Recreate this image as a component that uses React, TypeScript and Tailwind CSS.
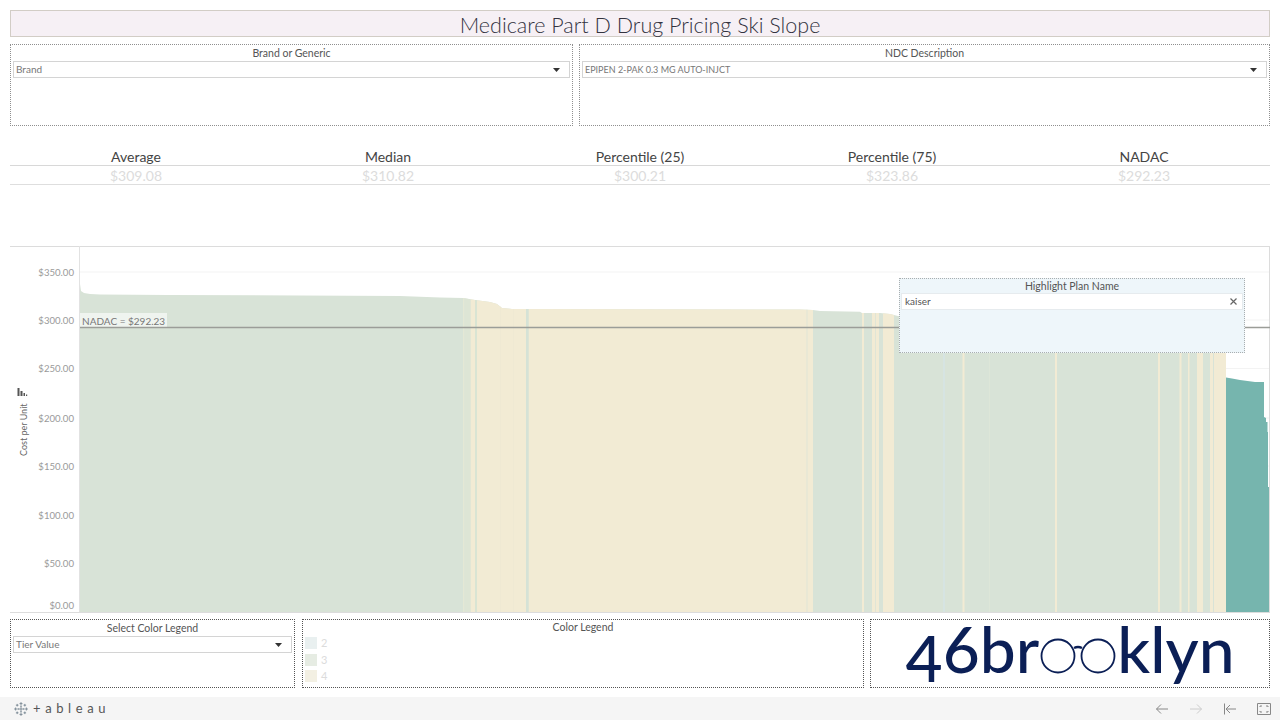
import type { JSX, ReactNode } from 'react';

const font = { fontFamily: 'Lato, "Open Sans", sans-serif' };

const GREEN = '#d8e3d7';
const YELLOW = '#f2ebd4';
const TEAL = '#76b5ae';

const stats = [
  { label: 'Average', value: '$309.08' },
  { label: 'Median', value: '$310.82' },
  { label: 'Percentile (25)', value: '$300.21' },
  { label: 'Percentile (75)', value: '$323.86' },
  { label: 'NADAC', value: '$292.23' },
];

const ticks = [
  { label: '$350.00', y: 272 },
  { label: '$300.00', y: 320 },
  { label: '$250.00', y: 368.5 },
  { label: '$200.00', y: 418 },
  { label: '$150.00', y: 466 },
  { label: '$100.00', y: 515 },
  { label: '$50.00', y: 563 },
  { label: '$0.00', y: 605 },
];

// outline of the sorted cost curve, left to right
const curve =
  '80,612 80,284 81,291 84,293 90,294 100,294.5 168,295 300,295.5 400,296 440,297.5 463,298 475,300 490,302 497,304 502,308 512,309 800,309.5 813,310 820,311 860,311.7 862,313 880,313 890,314 898,316 1226,330 1226,612';
const teal =
  '1226,612 1226,377.5 1232,378.5 1240,380 1255,382 1264,382 1264,417 1266,418 1266,422 1267.5,422 1267.5,432 1268,432 1268,487 1269,487 1269,612';

// [x, width, colour] of the tier bands
const bands: [number, number, string][] = [
  [463, 1.5, '#e4e8d5'],
  [464.5, 6, '#dde5d5'],
  [470.7, 4.3, YELLOW],
  [475, 2, '#d9e4d3'],
  [477, 336, YELLOW],
  [500, 1, '#efe9d3'],
  [513, 1, '#efe9d3'],
  [526, 2.7, '#d5e2d6'],
  [806.5, 1, '#dfe6d5'],
  [862, 2, YELLOW],
  [872, 3, YELLOW],
  [875.7, 3.3, YELLOW],
  [883, 11, YELLOW],
  [943, 2, '#d6e4e2'],
  [962.5, 2, YELLOW],
  [989, 1, '#dde6d8'],
  [1055, 2, YELLOW],
  [1158, 2, YELLOW],
  [1179.5, 2, YELLOW],
  [1188, 1.5, YELLOW],
  [1197, 6, YELLOW],
  [1210, 3, YELLOW],
  [1214, 12, YELLOW],
];

function FilterBox({ title, value, textClass, className }: { title: string; value: string; textClass: string; className: string }): JSX.Element {
  return (
    <div className={`border border-dotted border-[#8f8f8f] px-[2px] ${className}`}>
      <div className="text-center text-[10.5px] leading-[14px] mt-[1px] text-[#555]">{title}</div>
      <Select value={value} textClass={textClass} />
    </div>
  );
}

function Select({ value, textClass }: { value: string; textClass: string }): JSX.Element {
  return (
    <div className="h-[17px] mt-[1px] border border-[#d4d4d4] flex items-center justify-between pl-[2px] pr-[9px]">
      <span className={`${textClass} text-[#777]`}>{value}</span>
      <svg width="7" height="4" viewBox="0 0 7 4"><path d="M0 0h7L3.5 4z" fill="#333" /></svg>
    </div>
  );
}

function LegendRow({ color, label }: { color: string; label: string }): JSX.Element {
  return (
    <div className="flex items-center gap-[4px] h-[16.5px]">
      <div className="w-[12px] h-[12px]" style={{ backgroundColor: color }} />
      <span className="text-[11px] text-[#dcdcdc]">{label}</span>
    </div>
  );
}

function Chart(): JSX.Element {
  return (
    <div className="relative h-[367px] mt-[61px]">
      <svg width="1260" height="367" viewBox="10 246 1260 367" className="block">
        <defs>
          <clipPath id="under-curve"><polygon points={curve} /></clipPath>
        </defs>
        {ticks.slice(0, 7).map((t) => (
          <line key={t.y} x1="80" x2="1269" y1={t.y} y2={t.y} stroke="#f3f3f3" />
        ))}
        <polygon points={curve} fill={GREEN} />
        <g clipPath="url(#under-curve)">
          {bands.map(([x, w, c]) => (
            <rect key={x} x={x} y="246" width={w} height="367" fill={c} />
          ))}
        </g>
        <polygon points={teal} fill={TEAL} />
        <line x1="10" x2="1270" y1="246.5" y2="246.5" stroke="#dcdcdc" />
        <line x1="10" x2="1270" y1="612.5" y2="612.5" stroke="#dcdcdc" />
        <line x1="79.5" x2="79.5" y1="246" y2="612" stroke="#e2e2e2" />
        <line x1="1269.5" x2="1269.5" y1="246" y2="612" stroke="#dcdcdc" />
        <rect x="80" y="313" width="87" height="14" fill="#ffffff" fillOpacity="0.6" />
        <line x1="80" x2="1270" y1="327.5" y2="327.5" stroke="#9b9d98" strokeWidth="1.6" />
        <text x="82" y="324.5" fontSize="10" fill="#777" style={font}>NADAC = $292.23</text>
        {ticks.map((t) => (
          <text key={t.label} x="74" y={t.y + 3.5} textAnchor="end" fontSize="9.6" fill="#9a9a9a" style={font}>{t.label}</text>
        ))}
        <g fill="#555">
          <rect x="17.5" y="388" width="2" height="8" />
          <rect x="20.5" y="391" width="2" height="5" />
          <rect x="23.5" y="393" width="1.5" height="3" />
          <rect x="26" y="394.5" width="1.2" height="1.5" />
        </g>
        <text transform="translate(27 456) rotate(-90)" fontSize="9" fill="#666" style={font}>Cost per Unit</text>
      </svg>

      <div className="absolute left-[889px] top-[32px] w-[346px] h-[75px] bg-[#eef6fa] border border-dotted border-[#a9aeb0] px-[1px]">
        <div className="text-center text-[10.5px] leading-[14px] text-[#555]">Highlight Plan Name</div>
        <div className="h-[17px] bg-white border border-[#e6ebee] flex items-center justify-between pl-[3px] pr-[5px]">
          <span className="text-[10px] text-[#555]">kaiser</span>
          <svg width="7" height="7" viewBox="0 0 7 7"><path d="M.5.5l6 6M6.5.5l-6 6" stroke="#666" strokeWidth="1.2" /></svg>
        </div>
      </div>
    </div>
  );
}

function Logo(): JSX.Element {
  return (
    <div className="flex items-start justify-center -mt-[3px] text-[#0b1f56] text-[64px] font-medium leading-none" style={{ fontFamily: 'Lato, sans-serif' }}>
      <span><span className="align-[-9px]">4</span>6br</span>
      <svg width="76" height="38" viewBox="0 0 76 38" className="mt-[19px] mx-[1px] shrink-0">
        <circle cx="18" cy="20" r="16.5" fill="none" stroke="#0b1f56" strokeWidth="1.8" />
        <circle cx="58" cy="20" r="16.5" fill="none" stroke="#0b1f56" strokeWidth="1.8" />
        <path d="M34 12q4-2 8 0" fill="none" stroke="#0b1f56" strokeWidth="2.4" />
      </svg>
      <span>klyn</span>
    </div>
  );
}

function TableauMark(): JSX.Element {
  const crosses: [number, number, number][] = [
    [7, 7, 2.4], [7, 1.6, 1.5], [7, 12.4, 1.5], [1.6, 7, 1.5], [12.4, 7, 1.5],
    [3.2, 3.2, 1.3], [10.8, 3.2, 1.3], [3.2, 10.8, 1.3], [10.8, 10.8, 1.3],
    [7, 4.2, 0.6], [7, 9.8, 0.6], [4.2, 7, 0.6], [9.8, 7, 0.6],
  ];
  return (
    <svg width="14" height="14" viewBox="0 0 14 14">
      {crosses.map(([x, y, r]) => (
        <path key={`${x}-${y}`} d={`M${x - r} ${y}h${r * 2}M${x} ${y - r}v${r * 2}`} stroke="#6f7f8c" strokeWidth="0.8" />
      ))}
    </svg>
  );
}

function NavIcon({ children, width = 14 }: { children: ReactNode; width?: number }): JSX.Element {
  return <svg width={width} height="14" viewBox={`0 0 ${width} 14`} fill="none" strokeWidth="1">{children}</svg>;
}

export default function App(): JSX.Element {
  return (
    <div className="w-[1280px] h-[720px] overflow-hidden bg-white flex flex-col" style={font}>
      <div className="px-[10px] pt-[10px]">
        <div className="h-[27px] pt-[3px] bg-[#f6f0f5] border border-[#d2cdc6] flex items-center justify-center text-[21.5px] font-light text-[#33333f]">
          Medicare Part D Drug Pricing Ski Slope
        </div>

        <div className="flex gap-[6px] mt-[7px] h-[82px]">
          <FilterBox title="Brand or Generic" value="Brand" textClass="text-[10px]" className="w-[563px]" />
          <FilterBox title="NDC Description" value="EPIPEN 2-PAK 0.3 MG AUTO-INJCT" textClass="text-[9px]" className="flex-1" />
        </div>

        <div className="grid grid-cols-5 mt-[22px]">
          {stats.map((s) => (
            <div key={s.label} className="text-center text-[14px] leading-[16px] pt-[1px] text-[#444] border-b border-[#d8d8d8]">{s.label}</div>
          ))}
          {stats.map((s) => (
            <div key={s.value} className="text-center text-[14px] leading-[17px] pt-[1px] text-[#dcdcdc] border-b border-[#dedede]">{s.value}</div>
          ))}
        </div>

        <Chart />

        <div className="flex gap-[6px] mt-[6px] h-[69px]">
          <div className="w-[285px] border border-dotted border-[#555] px-[2px]">
            <div className="text-center text-[10.5px] leading-[14px] mt-[1px] text-[#555]">Select Color Legend</div>
            <div className="mt-[1px]"><Select value="Tier Value" textClass="text-[10px]" /></div>
          </div>
          <div className="ml-[1px] w-[562px] border border-dotted border-[#555] px-[2px]">
            <div className="text-center text-[10.5px] leading-[14px] text-[#555] mb-[1px]">Color Legend</div>
            <LegendRow color="#e9f0f0" label="2" />
            <LegendRow color="#e6ece3" label="3" />
            <LegendRow color="#f3f0e3" label="4" />
          </div>
          <div className="flex-1 border border-dotted border-[#555]">
            <Logo />
          </div>
        </div>
      </div>

      <div className="mt-auto h-[23px] bg-[#f5f5f5] flex items-center pl-[14px] pr-[9px]">
        <TableauMark />
        <span className="ml-[5px] text-[13px] tracking-[4.6px] text-[#555]">+ableau</span>
        <div className="ml-auto flex items-center gap-[20px]">
          <NavIcon><path d="M13 7H1.5M6 2.5L1.5 7 6 11.5" stroke="#888" /></NavIcon>
          <NavIcon><path d="M1 7h11.5M8 2.5L12.5 7 8 11.5" stroke="#ccc" /></NavIcon>
          <NavIcon><path d="M1.5 1.5v11M13 7H3M7 3L3 7l4 4" stroke="#888" /></NavIcon>
          <NavIcon><path d="M.5 1.5h13v11H.5zM3 5V4h2M9 4h2v1M3 9v1h2M9 10h2V9" stroke="#888" /></NavIcon>
        </div>
      </div>
    </div>
  );
}
